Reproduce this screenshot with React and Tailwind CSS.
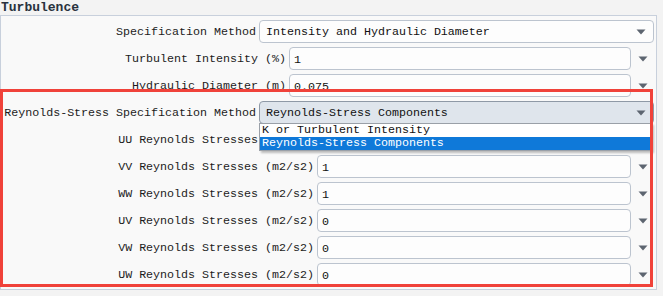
import React from "react";

const Arrow = () => (
  <svg width="10" height="6" viewBox="0 0 10 6" className="block">
    <polygon points="0.5,0.5 9.5,0.5 5,5.5" fill="#5d6570" />
  </svg>
);

function SelectRow({ label, value, labelW, focused }) {
  return (
    <div className="flex items-center h-[23px]">
      <div className={`${labelW} text-right pr-[3px] whitespace-nowrap text-[#1c1c1c]`}>{label}</div>
      <div
        className={
          "w-[395px] h-[23px] flex items-center justify-between pl-[6px] pr-[7px] rounded-[4px] border " +
          (focused ? "bg-[#dfe5ec] border-[#8f99a6]" : "bg-[#fdfdfd] border-[#bcc4cf]")
        }
      >
        <span className="text-[#111]">{value}</span>
        <Arrow />
      </div>
    </div>
  );
}

function InputRow({ label, value, labelW, inputW }) {
  return (
    <div className="flex items-center h-[23px]">
      <div className={`${labelW} text-right pr-[3px] whitespace-nowrap text-[#1c1c1c]`}>{label}</div>
      <div className={`${inputW} h-[23px] flex items-center pl-[4px] pt-[2px] rounded-[4px] border border-[#bcc4cf] bg-[#fdfdfd] text-[#111]`}>
        {value}
      </div>
      <div className="w-[24px] flex justify-center">
        <Arrow />
      </div>
    </div>
  );
}

export default function App() {
  const stresses = [
    ["UU", ""],
    ["VV", "1"],
    ["WW", "1"],
    ["UV", "0"],
    ["VW", "0"],
    ["UW", "0"],
  ];

  return (
    <div className="relative w-[663px] h-[296px] overflow-hidden bg-[#f3f3f3] font-[family-name:'Liberation_Mono',monospace] text-[11.67px] leading-[14px]">
      <div className="h-[15px] pl-[1px] pt-[1px] text-[13px] font-bold leading-[13px] text-[#28313d]">Turbulence</div>

      <div className="w-[657px] h-[275px] border border-[#c8d0dc] bg-[#f9f9f9] pt-[4px] flex flex-col gap-[4px]">
        <SelectRow label="Specification Method" value="Intensity and Hydraulic Diameter" labelW="w-[258px]" />
        <InputRow label="Turbulent Intensity (%)" value="1" labelW="w-[288px]" inputW="w-[342px]" />
        <InputRow label="Hydraulic Diameter (m)" value="0.075" labelW="w-[288px]" inputW="w-[342px]" />
        <SelectRow
          label="Reynolds-Stress Specification Method"
          value="Reynolds-Stress Components"
          labelW="w-[258px]"
          focused
        />
        {stresses.map(([k, v]) => (
          <InputRow
            key={k}
            label={`${k} Reynolds Stresses (m2/s2)`}
            value={v}
            labelW="w-[316px]"
            inputW="w-[314px]"
          />
        ))}
      </div>

      {/* open dropdown list */}
      <div className="absolute left-[259px] top-[123px] w-[393px] h-[28px] border border-[#9aa0a8] bg-white shadow-[2px_2px_2px_rgba(0,0,0,0.25)] text-[#111]">
        <div className="h-[13px] pl-[2px] leading-[13px]">K or Turbulent Intensity</div>
        <div className="h-[13px] pl-[2px] leading-[13px] bg-[#0f79d9] text-white">Reynolds-Stress Components</div>
      </div>

      {/* highlight annotation */}
      <div className="absolute left-0 top-[89px] w-[653px] h-[198px] border-[3px] border-[#f0423a] pointer-events-none" />
    </div>
  );
}
